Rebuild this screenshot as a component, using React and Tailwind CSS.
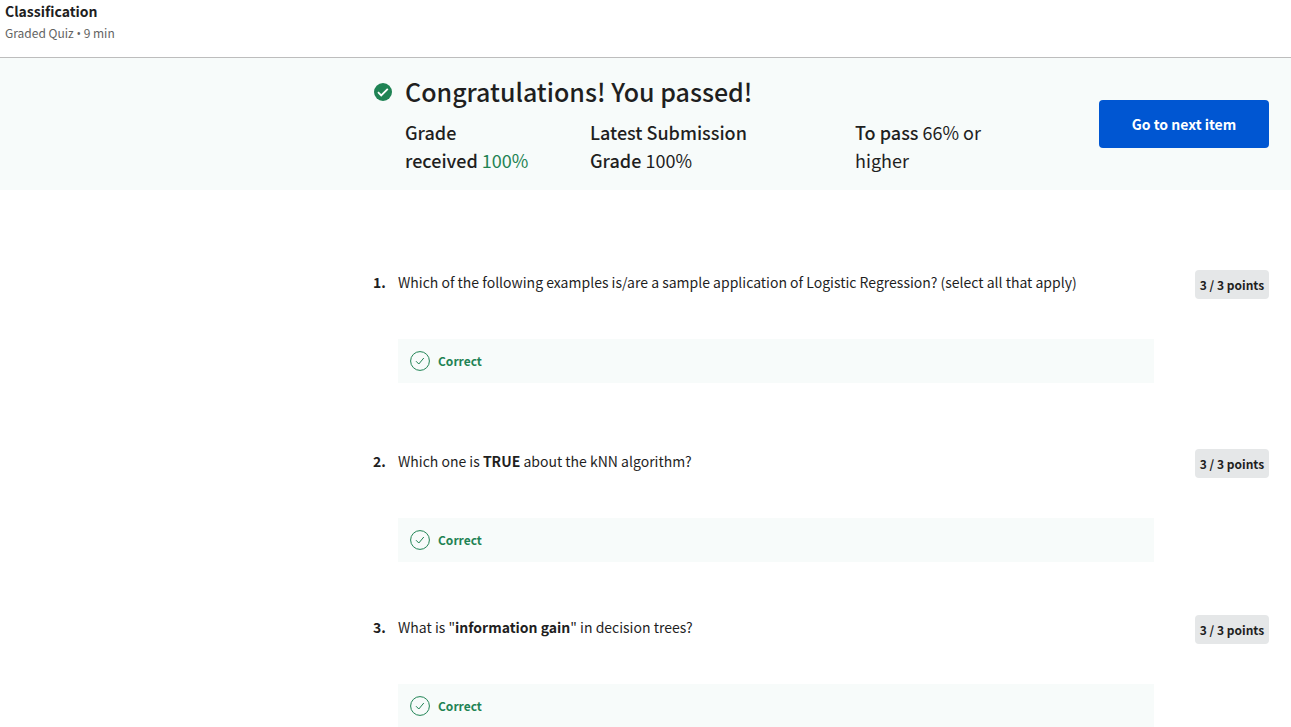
import React from "react";

function SolidCheck() {
  return (
    <svg viewBox="0 0 18 18" className="mt-[9px] size-[18px] shrink-0" aria-hidden="true">
      <circle cx="9" cy="9" r="9" fill="#1f8354" />
      <path d="M4 9.2l3.2 3.2 6.6-6.6" fill="none" stroke="#fff" strokeWidth="1.8" />
    </svg>
  );
}

function OutlineCheck() {
  return (
    <svg viewBox="0 0 20 20" className="size-5 shrink-0" fill="none" stroke="#1f8354" aria-hidden="true">
      <circle cx="10" cy="10" r="9.4" strokeWidth="1" />
      <path d="M6 10.2l2.8 2.8 5-6" strokeWidth="1" />
    </svg>
  );
}

function Question({ number, className, children }) {
  return (
    <li className={className}>
      <div className="flex items-start">
        <span className="w-[25px] shrink-0 text-sm leading-6 font-bold">{number}.</span>
        <div className="mr-[41px] min-w-0 flex-1">
          <p className="text-sm leading-6">{children}</p>
          <div className="mt-[45px] flex h-11 items-center gap-2 bg-[#f7fbfa] px-3 text-[12px] font-bold text-[#1f8354]">
            <OutlineCheck />
            <span>Correct</span>
          </div>
        </div>
        <span className="flex h-[29px] w-[74px] shrink-0 items-center justify-center rounded bg-[#e5e7e8] text-[12px] font-bold whitespace-nowrap">
          3 / 3 points
        </span>
      </div>
    </li>
  );
}

export default function App() {
  return (
    <div className="h-screen overflow-hidden bg-white font-['Noto_Sans_CJK_SC',sans-serif] text-[#1f1f1f]">
      <header className="flex h-[58px] flex-col border-b border-[#bdbdbd] px-[5px]">
        <h1 className="text-sm leading-[22px] font-bold">Classification</h1>
        <p className="text-[12px] leading-[22px] text-[#636363]">
          Graded Quiz <span className="font-['Open_Sans',sans-serif]">•</span> 9 min
        </p>
      </header>

      <section className="flex items-center bg-[#f7fbfa] pt-4 pr-[22px] pb-4 pl-[374px]">
        <div className="flex flex-1 items-start gap-[13px]">
          <SolidCheck />
          <div className="flex-1">
            <h2 className="text-[25px] leading-[34px] font-medium">Congratulations! You passed!</h2>
            <div className="mt-2.5 grid grid-cols-[185px_265px_1fr] text-lg leading-7">
              <p className="pr-15">
                <span className="font-medium">Grade received</span>{" "}
                <span className="text-[#1f8354]">100%</span>
              </p>
              <p className="pr-20">
                <span className="font-medium">Latest Submission Grade</span> <span>100%</span>
              </p>
              <p className="pr-25">
                <span className="font-medium">To pass</span> <span>66% or higher</span>
              </p>
            </div>
          </div>
        </div>
        <button
          type="button"
          className="h-12 w-[170px] shrink-0 rounded-sm bg-[#0056d2] text-sm font-bold text-white"
        >
          Go to next item
        </button>
      </section>

      <ol className="pt-20 pr-[22px] pl-[373px]">
        <Question number={1} className="pb-[66px]">
          Which of the following examples is/are a sample application of Logistic Regression? (select all that apply)
        </Question>
        <Question number={2} className="pb-[53px]">
          Which one is <b>TRUE</b> about the kNN algorithm?
        </Question>
        <Question number={3}>
          What is "<b>information gain</b>" in decision trees?
        </Question>
      </ol>
    </div>
  );
}
